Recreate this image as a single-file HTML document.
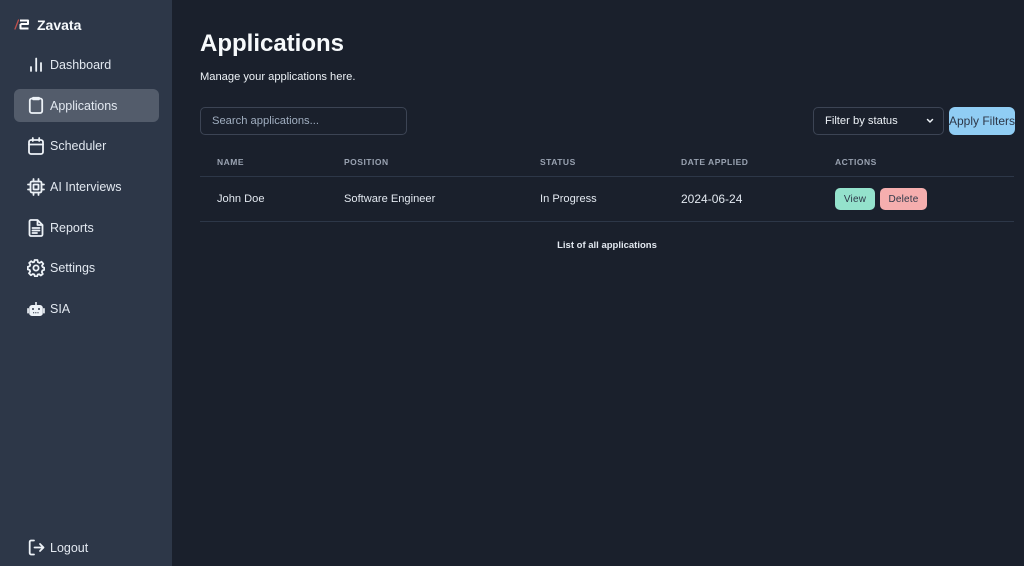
<!DOCTYPE html>
<html><head><meta charset="utf-8"><style>
*{box-sizing:border-box}
html,body{margin:0;padding:0;width:1024px;height:566px;overflow:hidden;background:#1a202c;font-family:"Liberation Sans",sans-serif;color:#e2e8f0}
.t{position:absolute;white-space:nowrap;line-height:1}
#side{position:absolute;left:0;top:0;width:172px;height:566px;background:#2d3748}
.nav{font-size:12.5px;color:#e2e8f0;left:50px}
svg{position:absolute;fill:none;stroke:#edf2f7;stroke-width:1.8;stroke-linecap:round;stroke-linejoin:round}
.th{font-size:8.5px;font-weight:bold;letter-spacing:.5px;color:#9aa3b2;top:158px}
.td{font-size:11.1px;color:#e2e8f0;top:194px}
.box{position:absolute;border-radius:5px}
</style></head><body>
<div id="side"></div>
<svg style="left:14px;top:19px" width="16" height="11" viewBox="0 0 16 11"><path d="M1 10L4.500 1" stroke="#c0504d" stroke-width="1.300"/><path d="M6 1.500H14V5H6.500M6.500 5V9.500H14.500" stroke="#fff" stroke-width="2" stroke-linecap="butt"/></svg>
<div class="t" style="left:37px;top:18px;font-size:14px;font-weight:bold;color:#f7fafc">Zavata</div>

<svg style="left:28px;top:56px" width="16" height="16" viewBox="0 0 16 16"><path d="M3 15V11M8.200 15V2.500M13 15V7"/></svg>
<div class="t nav" style="top:58.500px">Dashboard</div>

<div class="box" style="left:14px;top:89px;width:145px;height:33px;background:#535c6b;border-radius:6px"></div>
<svg style="left:28px;top:96px" width="16" height="18" viewBox="0 0 16 18"><path d="M5 2.500H3.800A2 2 0 0 0 1.800 4.500V15A2 2 0 0 0 3.800 17H12.300A2 2 0 0 0 14.200 15V4.500A2 2 0 0 0 12.300 2.500H11M5 1.800H11V3.300H5Z"/></svg>
<div class="t nav" style="top:99.500px">Applications</div>

<svg style="left:28px;top:137px" width="16" height="18" viewBox="0 0 16 18"><rect x="1" y="3" width="14" height="14" rx="2"/><path d="M1 7.500H15M4.800 1V4M11.200 1V4"/></svg>
<div class="t nav" style="top:139.500px">Scheduler</div>

<svg style="left:27px;top:178px" width="18" height="18" viewBox="0 0 18 18"><rect x="3.500" y="3.500" width="11" height="11" rx="1.500"/><rect x="6.500" y="6.500" width="5" height="5" rx=".5"/><path d="M6.500 1V3.500M11.500 1V3.500M6.500 14.500V17M11.500 14.500V17M1 6.500H3.500M1 11.500H3.500M14.500 6.500H17M14.500 11.500H17"/></svg>
<div class="t nav" style="top:180.500px">AI Interviews</div>

<svg style="left:28px;top:219px" width="16" height="18" viewBox="0 0 16 18"><path d="M3 1H9.500L14.500 6V15.500A1.500 1.500 0 0 1 13 17H3A1.500 1.500 0 0 1 1.500 15.500V2.500A1.500 1.500 0 0 1 3 1ZM9.500 1V6H14.500M4.500 9H11.500M4.500 11.500H11.500M4.500 14H9"/></svg>
<div class="t nav" style="top:221.500px">Reports</div>

<svg style="left:27px;top:259px" width="18" height="18" viewBox="0 0 18 18"><circle cx="9" cy="9" r="2.600"/><path d="M7.600 1H10.400L10.900 3.200L12.600 3.900L14.500 2.700L16.300 4.800L15 6.600L15.600 8L17.300 8.800V10.800L15.400 11.500L14.800 13L15.800 15L13.800 16.500L12.200 15.200L10.700 15.500L10.200 17.300H7.800L7.300 15.500L5.800 15L3.900 16.200L2 14.300L3.200 12.500L2.700 11L.8 10.400V7.800L2.700 7.200L3.300 5.800L2.200 3.900L4.200 2.200L5.800 3.400L7.200 2.900Z"/></svg>
<div class="t nav" style="top:262px">Settings</div>

<svg style="left:27px;top:301px;stroke:none" width="18" height="16" viewBox="0 0 18 16"><rect x="2.200" y="4" width="13.600" height="11" rx="2.800" fill="#edf2f7" stroke="none"/><rect x=".2" y="7" width="1.700" height="5.500" rx=".8" fill="#edf2f7" stroke="none"/><rect x="16.100" y="7" width="1.700" height="5.500" rx=".8" fill="#edf2f7" stroke="none"/><rect x="8.200" y="1" width="1.600" height="3.500" fill="#edf2f7" stroke="none"/><circle cx="6" cy="8" r="1" fill="#2d3748" stroke="none"/><circle cx="12" cy="8" r="1" fill="#2d3748" stroke="none"/><path d="M6 11.800H12" stroke="#2d3748" stroke-width="1" stroke-dasharray="1.200 1" stroke-linecap="butt"/></svg>
<div class="t nav" style="top:302.500px">SIA</div>

<svg style="left:28px;top:539px" width="17" height="17" viewBox="0 0 17 17"><path d="M6 1.500H3.200A1.500 1.500 0 0 0 1.700 3V14A1.500 1.500 0 0 0 3.200 15.500H6M6.500 8.500H15.500M12 5L15.500 8.500L12 12"/></svg>
<div class="t nav" style="top:541.500px">Logout</div>

<div class="t" style="left:200px;top:32px;font-size:24px;font-weight:bold;color:#f7fafc">Applications</div>
<div class="t" style="left:200px;top:71.500px;font-size:11.150px;color:#edf2f7">Manage your applications here.</div>

<div class="box" style="left:200px;top:107px;width:207px;height:28px;border:1px solid #3c4454"></div>
<div class="t" style="left:212px;top:116px;font-size:11.200px;color:#a0aec0">Search applications...</div>

<div class="box" style="left:813px;top:107px;width:131px;height:28px;border:1px solid #3c4454"></div>
<div class="t" style="left:825px;top:116px;font-size:11.200px;color:#edf2f7">Filter by status</div>
<svg style="left:925px;top:117px;stroke-width:1.500" width="10" height="8" viewBox="0 0 10 8"><path d="M2.500 2.500L5 5L7.500 2.500"/></svg>

<div class="box" style="left:949px;top:107px;width:66px;height:28px;background:#90cdf4;border-radius:6px"></div>
<div class="t" style="left:949px;top:115px;font-size:12px;color:#2d3748;width:66px;text-align:center">Apply Filters</div>

<div class="t th" style="left:217px">NAME</div>
<div class="t th" style="left:344px">POSITION</div>
<div class="t th" style="left:540px">STATUS</div>
<div class="t th" style="left:681px">DATE APPLIED</div>
<div class="t th" style="left:835px">ACTIONS</div>
<div class="box" style="left:200px;top:176px;width:814px;height:1px;background:#2d3748;border-radius:0"></div>

<div class="t td" style="left:217px">John Doe</div>
<div class="t td" style="left:344px">Software Engineer</div>
<div class="t td" style="left:540px">In Progress</div>
<div class="t td" style="left:681px;font-size:12px;top:193px">2024-06-24</div>

<div class="box" style="left:835px;top:188px;width:40px;height:22px;background:#94e2cc"></div>
<div class="t" style="left:835px;top:194.500px;width:40px;text-align:center;font-size:10px;letter-spacing:.2px;color:#2d3748">View</div>
<div class="box" style="left:880px;top:188px;width:47px;height:22px;background:#f5aeae"></div>
<div class="t" style="left:880px;top:194.500px;width:47px;text-align:center;font-size:10px;letter-spacing:.2px;color:#2d3748">Delete</div>

<div class="box" style="left:200px;top:220.500px;width:814px;height:1px;background:#2d3748;border-radius:0"></div>
<div class="t" style="left:200px;top:240.500px;width:814px;text-align:center;font-size:9.500px;font-weight:bold;color:#e2e8f0">List of all applications</div>
</body></html>
